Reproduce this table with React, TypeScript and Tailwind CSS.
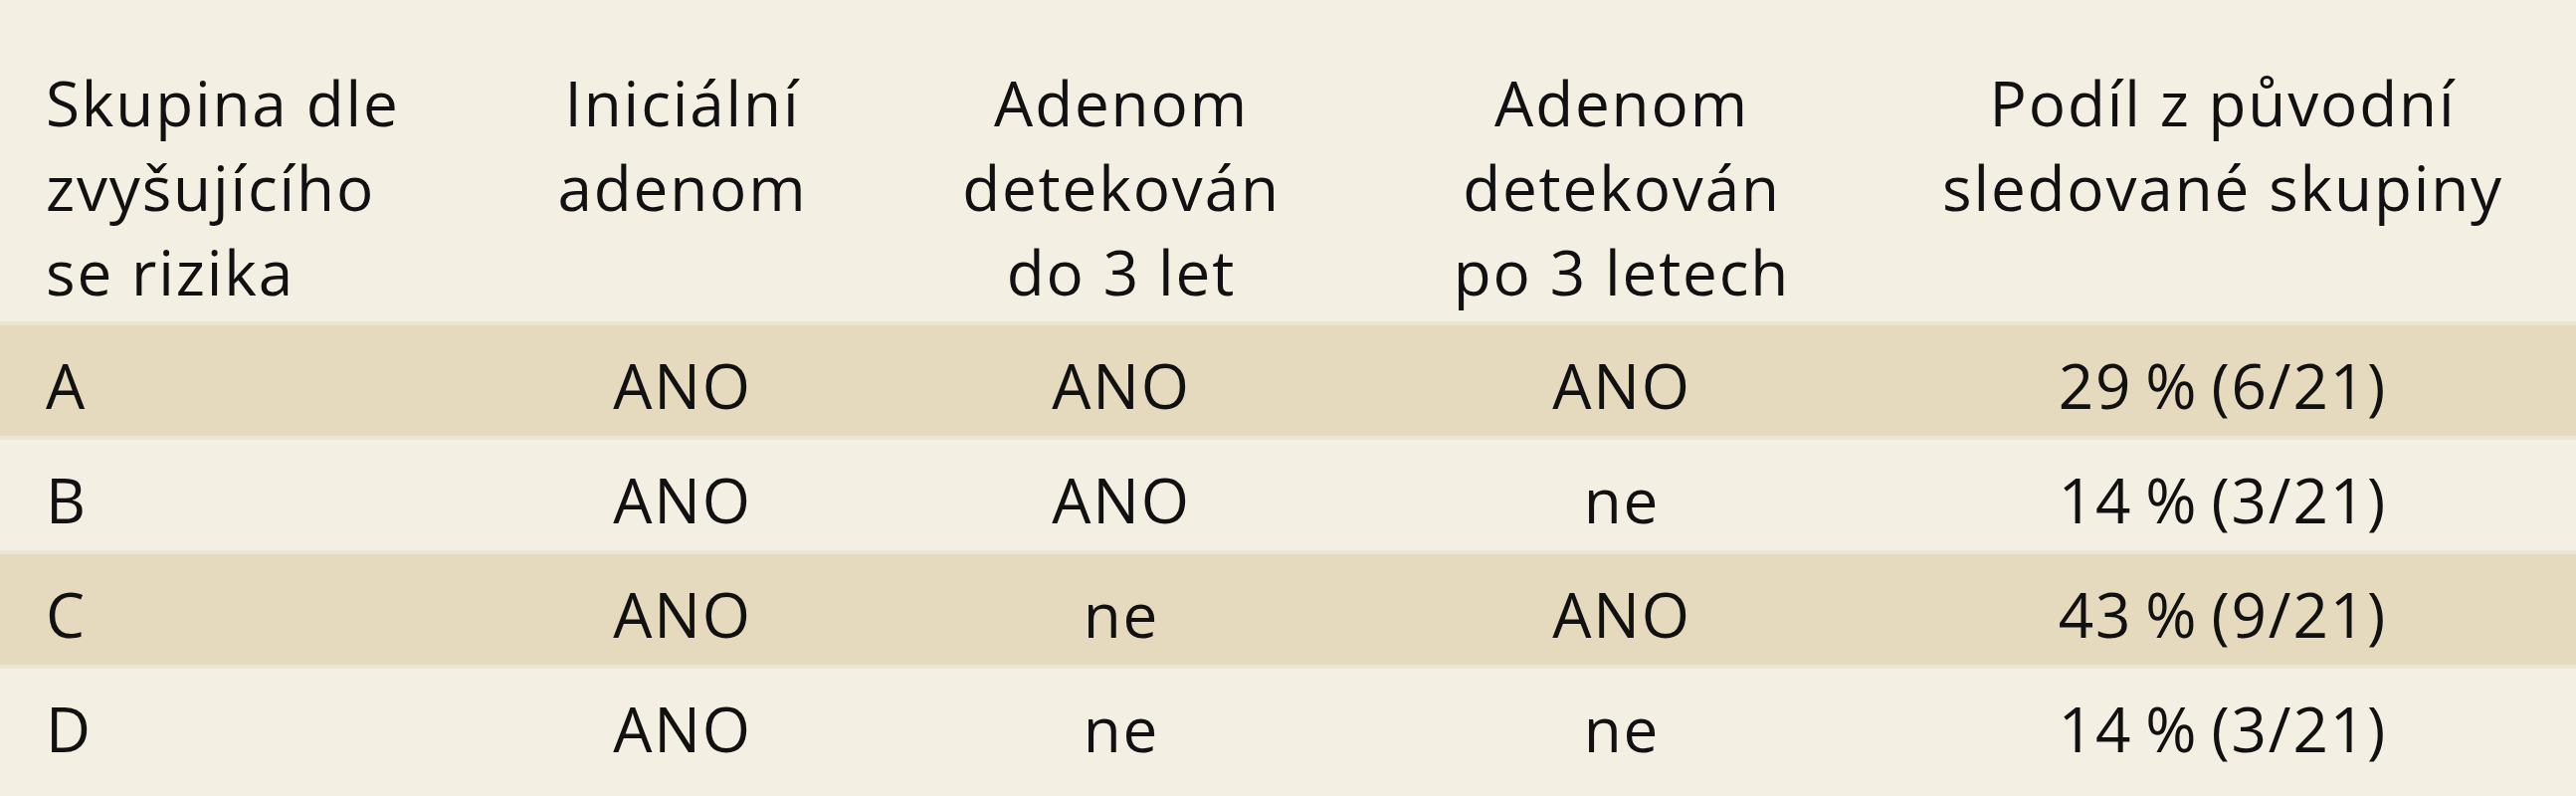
const headers = [
  ["Skupina dle", "zvyšujícího", "se rizika"],
  ["Iniciální", "adenom"],
  ["Adenom", "detekován", "do 3 let"],
  ["Adenom", "detekován", "po 3 letech"],
  ["Podíl z původní", "sledované skupiny"],
];

const rows = [
  ["A", "ANO", "ANO", "ANO", "29 % (6/21)"],
  ["B", "ANO", "ANO", "ne", "14 % (3/21)"],
  ["C", "ANO", "ne", "ANO", "43 % (9/21)"],
  ["D", "ANO", "ne", "ne", "14 % (3/21)"],
];

const cols = "grid grid-cols-[440px_492px_390px_616px_592px]";

export default function App() {
  return (
    <div className="h-[800px] w-[2589px] overflow-hidden bg-[#f4efe3] font-['Open_Sans',sans-serif] text-[62px] tracking-[0.03em] text-[#111]">
      <div className={`${cols} h-[323px] pt-[61px] leading-[85px]`}>
        {headers.map((lines, i) => (
          <div key={i} className={i === 0 ? "pl-[46px] text-left" : "text-center"}>
            {lines.map((line) => (
              <div key={line} className="whitespace-nowrap">
                {line}
              </div>
            ))}
          </div>
        ))}
      </div>

      {rows.map((row, r) => (
        <div
          key={row[0]}
          className={`${cols} h-[115px] items-center border-t-4 border-[#ece5d2] pt-[10px] [word-spacing:-5px] ${
            r % 2 === 0 ? "bg-[#e5dabd]" : "bg-[#f4efe3]"
          }`}
        >
          {row.map((cell, i) => (
            <div key={i} className={i === 0 ? "pl-[46px]" : "text-center"}>
              {cell}
            </div>
          ))}
        </div>
      ))}
    </div>
  );
}
